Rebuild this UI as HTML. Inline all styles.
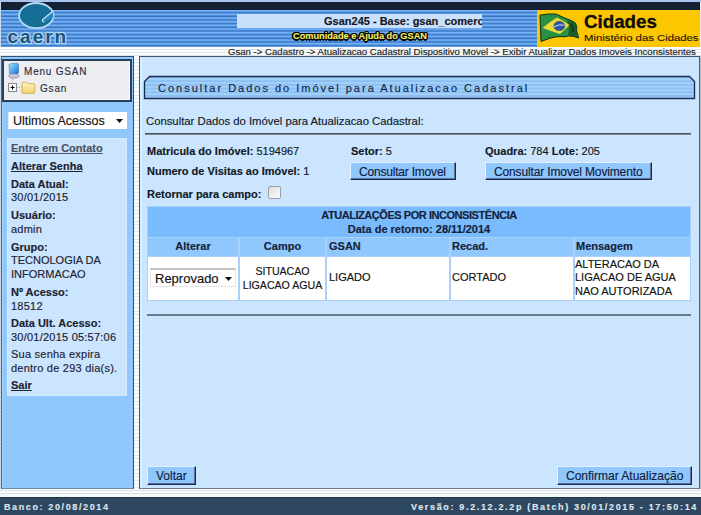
<!DOCTYPE html>
<html><head><meta charset="utf-8">
<style>
*{margin:0;padding:0;box-sizing:border-box}
html,body{width:701px;height:515px;overflow:hidden;background:#fafcfd;font-family:"Liberation Sans",sans-serif;position:relative}
div.a{-webkit-text-stroke:0.15px currentColor}
.a{position:absolute;white-space:nowrap}
#hdrtop{left:0;top:0;width:701px;height:2px;background:#a9c5ee}
#hdrdark{left:1px;top:2px;width:699px;height:8px;background:#142034}
#hdrstripe{left:1px;top:10px;width:699px;height:36.6px;background:repeating-linear-gradient(to bottom,#78b6fc 0,#78b6fc 0.4px,#2864b2 1.835px,#78b6fc 3.27px,#78b6fc 3.67px);background-position:0 0.7px}
#crumbbar{left:0;top:46.6px;width:701px;height:9.4px;background:linear-gradient(to bottom,#fafcfd 0,#fafcfd 2.4px,#dde3e6 2.4px,#dde3e6 3.4px,#fafcfd 3.4px,#fafcfd 5.4px,#dde3e6 5.4px,#dde3e6 6.4px,#fafcfd 6.4px,#fafcfd 8.4px,#dde3e6 8.4px)}
.tx{color:#111926}
.il{left:11px;font-size:11px;line-height:13px;color:#1c2230}
.fb{font-weight:bold}
.fu{text-decoration:underline}
.fg{color:#4a5060}
.ls{letter-spacing:0.23px}
</style></head><body>
<div class="a" id="hdrtop"></div>
<div class="a" id="hdrdark"></div>
<div class="a" id="hdrstripe"></div>
<div class="a" id="crumbbar"></div>

<!-- logo -->
<svg class="a" style="left:0;top:0" width="80" height="47" viewBox="0 0 80 47">
  <ellipse cx="36.3" cy="15.6" rx="17.2" ry="12.6" fill="#146e96" stroke="#b4daf2" stroke-width="1.8"/>
  <path d="M52.2 11.8 L42.6 19.6 Q42 21.6 44.2 22.2 Q49.5 21 53.2 17.2 Q53.6 14 52.2 11.8 Z" fill="#2586bc"/>
  <path d="M52.2 11.8 L42.6 19.6 Q42 21.6 44.2 22.2" fill="none" stroke="#cfe8f8" stroke-width="1.2"/>
  <text x="7.6" y="42.6" font-family="Liberation Sans" font-weight="bold" font-size="19" fill="#17567f" stroke="#b4d6f2" stroke-width="2.6" stroke-linejoin="round" paint-order="stroke" letter-spacing="1.95">caern</text>
</svg>

<!-- base box -->
<div class="a" style="left:237px;top:14px;width:245px;height:14px;background:#c9e1fa;overflow:hidden">
  <div class="a" style="left:87px;top:1px;font-size:11px;font-weight:bold;color:#16161f">Gsan245 - Base: gsan_comerc</div>
</div>
<div class="a" style="left:293px;top:31px;font-size:9.2px;font-weight:bold;color:#f2ec6a;text-shadow:1px 0 0 #000,-1px 0 0 #000,0 1px 0 #000,0 -1px 0 #000,1px 1px 0 #000,-1px -1px 0 #000,1px -1px 0 #000,-1px 1px 0 #000,1.5px 0 0.5px #000,-1.5px 0 0.5px #000,0 1.5px 0.5px #000,0 -1.5px 0.5px #000">Comunidade e Ajuda do GSAN</div>

<!-- cidades banner -->
<div class="a" style="left:537px;top:10px;width:163px;height:36.6px;background:#fcc600"></div>
<div class="a" style="left:700px;top:2px;width:1px;height:45px;background:#e2e8ee"></div>
<div class="a" style="left:0;top:2px;width:1px;height:45px;background:#c6daee"></div>
<svg class="a" style="left:537px;top:10px" width="45" height="36" viewBox="0 0 45 36">
  <path d="M3 5.2 Q11 3.5 19 4 Q26 7.5 34 10.5 Q39 12 39.5 15.5 Q40 19 39.5 21 Q41 24 41.5 28 Q36 25.5 31 26 Q27 27.5 24 26.5 Q18 26.5 12 28.5 Q8 30 4 31.5 Z" fill="#2a9044" stroke="#0c2e14" stroke-width="1"/>
  <path d="M30 10 Q37 11.5 39 15 Q40 19 39 21.5 Q40.5 24 41 27.5 Q36 25 31 25.5 Q33 20 30 10 Z" fill="#1a5c2a"/>
  <path d="M34 14 Q37 17 36 22" stroke="#0a2410" stroke-width="1" fill="none"/>
  <path d="M5.5 18 Q13 11.5 20 7.5 Q26 10.5 32.5 15 Q27 20.5 23 24 Q14 21 5.5 18 Z" fill="#eadb3a"/>
  <ellipse cx="22.3" cy="16" rx="5.4" ry="4.6" fill="#2f57aa" stroke="#1a2f72" stroke-width="0.6"/>
  <path d="M17 16.8 Q22 13.8 27.5 15.2" stroke="#dfe8f2" stroke-width="0.9" fill="none"/>
</svg>
<div class="a" id="cid" style="left:584px;top:12px;font-size:17.5px;font-weight:bold;color:#0d0d0d;-webkit-text-stroke:0.3px #0d0d0d;transform-origin:0 0;transform:scaleX(1.07)">Cidades</div>
<div class="a" id="min" style="left:584px;top:32px;font-size:9.6px;color:#1a1408;-webkit-text-stroke:0.12px #1a1408;transform-origin:0 0;transform:scaleX(1.18)">Ministério das Cidades</div>

<!-- breadcrumb -->
<div class="a" style="left:228px;top:46px;font-size:9.6px;color:#222">Gsan -&gt; Cadastro -&gt; Atualizacao Cadastral Dispositivo Movel -&gt; Exibir Atualizar Dados Imoveis Inconsistentes</div>

<!-- left panel -->
<div class="a" style="left:1px;top:56px;width:133px;height:433px;background:#90c7fc;border:1px solid #2f4d70;border-left-color:#46668a;border-bottom-color:#6d88a4;box-shadow:inset 1px 0 0 #a8d4fc"></div>
<div class="a" style="left:0;top:56px;width:1px;height:433px;background:repeating-linear-gradient(to bottom,#d4e0ec 0,#d4e0ec 2.6px,#b8c8da 2.6px,#b8c8da 3.6px)"></div>
<div class="a" style="left:2px;top:59px;width:130px;height:43px;background:#eceef2;border:2px solid #23405f;box-shadow:inset -1px -1px 0 #fafbfd"></div>
<!-- computer icon -->
<svg class="a" style="left:7px;top:62px" width="14" height="17" viewBox="0 0 14 17">
  <defs><linearGradient id="mg" x1="0" y1="0" x2="1" y2="1"><stop offset="0" stop-color="#a4e8fc"/><stop offset="0.55" stop-color="#4aa4e8"/><stop offset="1" stop-color="#2a5cb8"/></linearGradient></defs>
  <path d="M2 2.2 Q6 1 10.3 1.3 Q11.6 1.6 11.6 3 V10.3 Q11.2 12 9.2 12.4 L4.2 12.8 Q2.6 12.6 2.4 11 Z" fill="url(#mg)" stroke="#4a7cb8" stroke-width="0.6"/>
  <ellipse cx="6.8" cy="13.9" rx="5.1" ry="2.1" fill="#c8c8e0" stroke="#70709a" stroke-width="0.6"/>
</svg>
<div class="a tx" style="left:24px;top:66px;font-size:10px;letter-spacing:0.8px;color:#2e2e3c">Menu GSAN</div>
<svg class="a" style="left:7px;top:79px" width="30" height="16" viewBox="0 0 30 16">
  <defs><linearGradient id="fg" x1="0" y1="0" x2="0" y2="1"><stop offset="0" stop-color="#fff4c0"/><stop offset="1" stop-color="#f0d36c"/></linearGradient></defs>
  <path d="M5.5 0 V4" stroke="#a0a0a0" stroke-width="1" stroke-dasharray="1 1"/>
  <rect x="1.5" y="4.5" width="8" height="8" fill="#f8f8f8" stroke="#8a8a8a" stroke-width="1"/>
  <path d="M3.5 8.5 H7.5 M5.5 6.5 V10.5" stroke="#000" stroke-width="1"/>
  <path d="M10 8.5 H14.5" stroke="#a0a0a0" stroke-width="1" stroke-dasharray="1 1"/>
  <path d="M15 4.5 Q15 3.2 16.3 3.2 H19.5 L20.8 4.6 H26.7 Q27.8 4.6 27.8 5.8 V13 Q27.8 14.3 26.6 14.3 H16.2 Q15 14.3 15 13 Z" fill="url(#fg)" stroke="#c4a450" stroke-width="0.8"/>
</svg>
<div class="a tx" style="left:40px;top:83px;font-size:10px;letter-spacing:0.8px;color:#2e2e3c">Gsan</div>

<!-- ultimos acessos select -->
<div class="a" style="left:8px;top:112px;width:119px;height:17px;background:#fff;border-left:1px solid #e8eef4"></div>
<div class="a" style="left:13px;top:114px;font-size:12.5px;color:#111">Ultimos Acessos</div>
<svg class="a" style="left:116px;top:119px" width="8" height="5"><path d="M0 0 H7 L3.5 4 Z" fill="#111"/></svg>

<!-- info box -->
<div class="a" style="left:7px;top:137.5px;width:120px;height:258.5px;background:#cbe5fe;border:1px solid #d8eafc"></div>
<div class="a" id="info" style="left:0;top:0">
  <div class="a il fb fu fg" style="top:142px">Entre em Contato</div>
  <div class="a il fb fu" style="top:160px">Alterar Senha</div>
  <div class="a il fb" style="top:178px">Data Atual:</div>
  <div class="a il ls" style="top:191px">30/01/2015</div>
  <div class="a il fb" style="top:209px">Usuário:</div>
  <div class="a il ls" style="top:223px">admin</div>
  <div class="a il fb" style="top:241px">Grupo:</div>
  <div class="a il" style="top:254px">TECNOLOGIA DA</div>
  <div class="a il" style="top:268px">INFORMACAO</div>
  <div class="a il fb" style="top:286px">Nº Acesso:</div>
  <div class="a il ls" style="top:300px">18512</div>
  <div class="a il fb" style="top:317px">Data Ult. Acesso:</div>
  <div class="a il ls" style="top:331px">30/01/2015 05:57:06</div>
  <div class="a il ls" style="top:348px">Sua senha expira</div>
  <div class="a il ls" style="top:362px">dentro de 293 dia(s).</div>
  <div class="a il fb fu" style="top:379.4px">Sair</div>
</div>

<!-- dotted gutter -->
<div class="a" style="left:134px;top:56px;width:5px;height:433px;background:repeating-linear-gradient(to bottom,#fcfdfe 0,#fcfdfe 2.6px,#dfe8f0 2.6px,#dfe8f0 3.6px)"></div>

<!-- main panel -->
<div class="a" style="left:139px;top:56px;width:561px;height:433px;background:#cbe5fe;border:1px solid #44566c;border-right:1px solid #4e5e70;box-shadow:inset 2px 0 0 #d6eefe,1px 0 0 #b4c0cc;border-bottom-color:#6d7c8c"></div>

<!-- title bar -->
<svg class="a" style="left:143px;top:75px" width="553" height="25" viewBox="0 0 553 25">
  <defs><pattern id="ts" width="10" height="3.7" patternUnits="userSpaceOnUse" y="3.4"><rect width="10" height="3.7" fill="#a2d0fa"/><rect y="1.85" width="10" height="1.85" fill="#8cc0f2"/></pattern></defs>
  <path d="M1.5 23.5 V6.5 L6.5 1.5 H546.5 L551.5 6.5 V23.5 Z" fill="url(#ts)" stroke="#182c4c" stroke-width="1.35"/>
</svg>
<div class="a" style="left:158px;top:82px;font-size:11px;letter-spacing:2px;color:#102646">Consultar Dados do Imóvel para Atualizacao Cadastral</div>

<div class="a tx" style="left:146px;top:115px;font-size:11.3px">Consultar Dados do Imóvel para Atualizacao Cadastral:</div>
<div class="a" style="left:145px;top:133px;width:546px;height:2px;background:linear-gradient(#4a5462 0,#4a5462 1px,#7c8898 1px)"></div>

<div class="a tx" style="left:147px;top:145px;font-size:11px"><b>Matricula do Imóvel:</b> 5194967</div>
<div class="a tx" style="left:351px;top:145px;font-size:11px"><b>Setor:</b> 5</div>
<div class="a tx" style="left:485px;top:145px;font-size:11px"><b>Quadra:</b> 784 <b>Lote:</b> 205</div>
<div class="a tx" style="left:147px;top:164.5px;font-size:11px"><b>Numero de Visitas ao Imóvel:</b> 1</div>

<div class="a" style="left:350px;top:162px;width:106px;height:18px;background:#90c7fc;border:1px solid;border-color:#e4f0fc #1a2a4e #1a2a4e #e4f0fc;border-width:1px 1px 1px 1px;box-shadow:inset -1px -1px 0 #5c7098"></div>
<div class="a" style="left:359px;top:165px;font-size:12px;letter-spacing:-0.2px;color:#0f2040">Consultar Imovel</div>
<div class="a" style="left:485px;top:162px;width:167px;height:18px;background:#90c7fc;border:1px solid;border-color:#e4f0fc #1a2a4e #1a2a4e #e4f0fc;border-width:1px 1px 1px 1px;box-shadow:inset -1px -1px 0 #5c7098"></div>
<div class="a" style="left:494px;top:165px;font-size:12px;letter-spacing:-0.14px;color:#0f2040">Consultar Imovel Movimento</div>

<div class="a tx" style="left:147px;top:188.3px;font-size:11px;font-weight:bold">Retornar para campo:</div>
<div class="a" style="left:268px;top:186px;width:13px;height:13px;border-radius:2px;background:linear-gradient(135deg,#dedede,#fbfbfb);border:1px solid #9ca0a8"></div>

<!-- table -->
<div class="a" style="left:147px;top:206px;width:544px;height:95px;background:#a8d2fa"></div>
<div class="a" style="left:148px;top:207px;width:542px;height:30px;background:#79bbfd"></div>
<div class="a" style="left:148px;top:208px;width:542px;text-align:center;font-size:11px;line-height:14px;font-weight:bold;color:#14223a"><span style="letter-spacing:-0.45px">ATUALIZAÇÕES POR INCONSISTÊNCIA</span><br>Data de retorno: 28/11/2014</div>
<!-- col headers -->
<div class="a" style="left:148px;top:238px;width:90px;height:18px;background:#90c7fc"></div>
<div class="a" style="left:240px;top:238px;width:85px;height:18px;background:#90c7fc"></div>
<div class="a" style="left:327px;top:238px;width:122px;height:18px;background:#90c7fc"></div>
<div class="a" style="left:451px;top:238px;width:122px;height:18px;background:#90c7fc"></div>
<div class="a" style="left:575px;top:238px;width:115px;height:18px;background:#90c7fc"></div>
<div class="a" style="left:148px;top:240px;width:90px;text-align:center;font-size:11px;font-weight:bold;color:#14223a">Alterar</div>
<div class="a" style="left:240px;top:240px;width:85px;text-align:center;font-size:11px;font-weight:bold;color:#14223a">Campo</div>
<div class="a" style="left:329px;top:240px;font-size:11px;font-weight:bold;color:#14223a">GSAN</div>
<div class="a" style="left:452px;top:240px;font-size:11px;font-weight:bold;color:#14223a">Recad.</div>
<div class="a" style="left:576px;top:240px;font-size:11px;font-weight:bold;color:#14223a">Mensagem</div>
<!-- data row -->
<div class="a" style="left:148px;top:257px;width:90px;height:43px;background:#fff"></div>
<div class="a" style="left:240px;top:257px;width:85px;height:43px;background:#fff"></div>
<div class="a" style="left:327px;top:257px;width:122px;height:43px;background:#fff"></div>
<div class="a" style="left:451px;top:257px;width:122px;height:43px;background:#fff"></div>
<div class="a" style="left:575px;top:257px;width:115px;height:43px;background:#fff"></div>
<div class="a" style="left:150px;top:268px;width:86px;height:19px;background:#fff;border:1px solid #e4e4e4;border-top:2px solid #c4c4c4"></div>
<div class="a" style="left:155px;top:271px;font-size:13px;color:#111">Reprovado</div>
<svg class="a" style="left:225px;top:277px" width="8" height="5"><path d="M0 0 H7 L3.5 4 Z" fill="#111"/></svg>
<div class="a" style="left:240px;top:264px;width:85px;text-align:center;font-size:10.6px;line-height:14px;color:#111">SITUACAO<br>LIGACAO AGUA</div>
<div class="a" style="left:329px;top:271px;font-size:11px;color:#111">LIGADO</div>
<div class="a" style="left:452px;top:271px;font-size:11px;color:#111">CORTADO</div>
<div class="a" style="left:575px;top:257.5px;font-size:11px;line-height:13.5px;color:#111">ALTERACAO DA<br>LIGACAO DE AGUA<br>NAO AUTORIZADA</div>

<div class="a" style="left:147px;top:314px;width:544px;height:2px;background:#6c7a8a"></div>

<!-- bottom buttons -->
<div class="a" style="left:147px;top:466px;width:49px;height:19px;background:#90c7fc;border:1px solid;border-color:#e4f0fc #1a2a4e #1a2a4e #e4f0fc;border-width:1px 1px 1px 1px;box-shadow:inset -1px -1px 0 #5c7098"></div>
<div class="a" style="left:156px;top:469px;font-size:12px;color:#0f2040">Voltar</div>
<div class="a" style="left:557px;top:466px;width:135px;height:19px;background:#90c7fc;border:1px solid;border-color:#e4f0fc #1a2a4e #1a2a4e #e4f0fc;border-width:1px 1px 1px 1px;box-shadow:inset -1px -1px 0 #5c7098"></div>
<div class="a" style="left:566px;top:469px;font-size:12px;color:#0f2040">Confirmar Atualização</div>

<!-- bottom strip -->
<div class="a" style="left:0;top:489px;width:701px;height:8px;background:linear-gradient(to bottom,#fafcfd 0,#fafcfd 1px,#dce3e7 1px,#dce3e7 2px,#fafcfd 2px,#fafcfd 4px,#d9e0e4 4px,#d9e0e4 5px,#f2fafc 5px)"></div>
<div class="a" style="left:0;top:497px;width:701px;height:18px;background:#2f4862;border-top:1px solid #243447"></div>
<div class="a" style="left:4px;top:501.5px;font-size:9px;font-weight:bold;letter-spacing:1.62px;color:#dfe6ee">Banco: 20/08/2014</div>
<div class="a" style="left:411px;top:501.5px;font-size:9px;font-weight:bold;letter-spacing:1.66px;color:#dfe6ee">Versão: 9.2.12.2.2p (Batch) 30/01/2015 - 17:50:14</div>
</body></html>
